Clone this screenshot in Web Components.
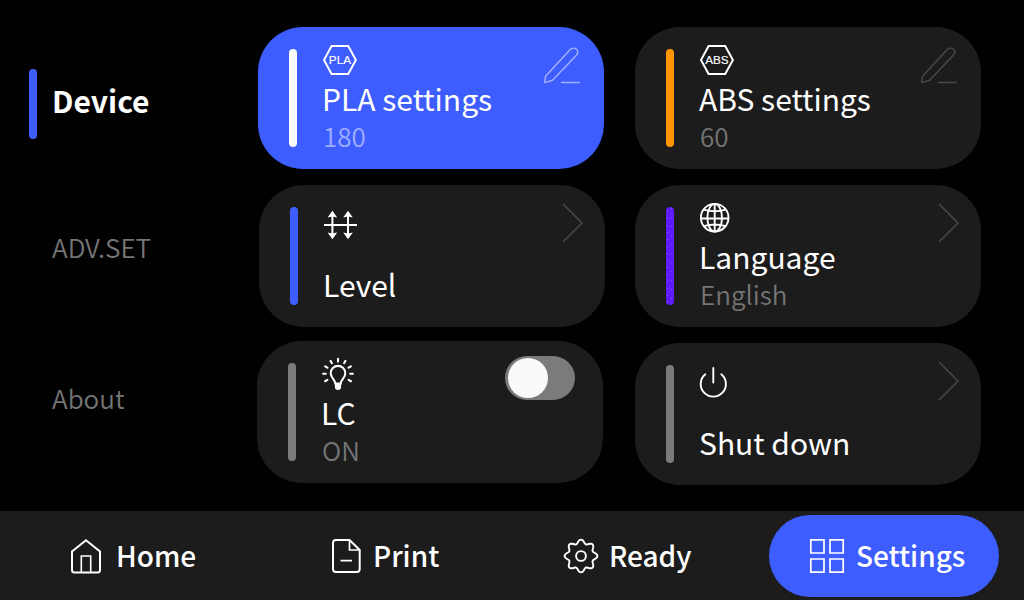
<!DOCTYPE html>
<html lang="en">
<head>
<meta charset="utf-8">
<title>Printer settings</title>
<style>
html,body{margin:0;height:100%;background:#010101;overflow:hidden}
body{font-family:"Noto Sans CJK SC","Noto Sans",sans-serif;color:#fff}
</style>
</head>
<body>
<printer-screen></printer-screen>
<script>
const gear = Array.from({length: 120}, (_, i) => {
  const t = i * Math.PI / 60, r = 14.5 + 1.9 * Math.cos(8 * t);
  return (17 + r * Math.cos(t)).toFixed(2) + ' ' + (17 + r * Math.sin(t)).toFixed(2);
}).join('L');
const hex = label => `<svg width="36" height="36"><path d="M9.600 3H26.200L33.900 17 26.200 31H9.600L2 17Z" stroke-width="2"/><text x="17.900" y="21" text-anchor="middle" font-family="Liberation Sans,sans-serif" font-size="11.7" fill="currentColor" stroke="currentColor" stroke-width=".15">${label}</text></svg>`;
const rays = [-120,-90,-60,-30,0,30,60,90,120].map(a => `<path d="M17 4.600V1.900" transform="rotate(${a} 17 16.800)"/>`).join('');
const ICONS = {
  pla: hex('PLA'),
  abs: hex('ABS'),
  level: `<svg width="36" height="40"><path d="M1 24H34" stroke-width="2"/><path d="M9.400 13V23M25 13V23M9.400 25V35M25 25V35" stroke-width="2"/><path fill="currentColor" stroke="none" d="M9.400 9.800 14.200 16.400 9.400 15.400 4.600 16.400ZM25 9.800 29.800 16.400 25 15.400 20.200 16.400ZM9.400 38.200 14.200 31.600 9.400 32.600 4.600 31.600ZM25 38.200 29.800 31.600 25 32.600 20.200 31.600Z"/></svg>`,
  globe: `<svg width="36" height="36"><g stroke-width="1.900"><circle cx="15.700" cy="16.700" r="13.800"/><ellipse cx="15.700" cy="16.700" rx="7.300" ry="13.800"/><path d="M15.700 3V30.500M1.900 17.500H29.500M4.700 8.600Q15.700 12 26.700 8.600M4.700 25.200Q15.700 21.800 26.700 25.200"/></g></svg>`,
  bulb: `<svg width="36" height="36"><g stroke-width="2.100" stroke-linecap="round">${rays}</g><path d="M14.300 26.500C14.300 23 9.700 21 9.700 16.200A7.300 7.300 0 0 1 24.300 16.200C24.300 21 19.700 23 19.700 26.500Z" stroke-width="2.100"/><path d="M13.900 26H20.100V30Q20.100 33 17 33T13.900 30Z" fill="currentColor" stroke="none"/></svg>`,
  power: `<svg width="36" height="40"><g stroke-width="1.900" stroke-linecap="round"><path d="M14.300 9V23.500M6.300 15.300A12.600 12.600 0 1 0 22.300 15.300"/></g></svg>`,
  pencil: `<svg width="38" height="38"><g stroke-width="1.500" stroke-linejoin="round" stroke-linecap="round"><path d="M1.800 35.600 2.500 29.200 27 2.800C29 0.700 31.800 0.700 33.500 2.200S35.200 6.200 33.400 8.200L9.500 33.300Z"/><path d="M18.500 35.500H36.500"/></g></svg>`,
  chevron: `<svg width="22" height="40"><path d="M1 1 20 20 1 39" stroke-width="1.500"/></svg>`,
  home: `<svg width="30" height="35"><path d="M1 12.500 15 1.200 29 12.500V31Q29 33.500 26.500 33.500H3.500Q1 33.500 1 31Z" stroke-width="2"/><path d="M10.300 33V17H19.700V33" stroke-width="1.600"/></svg>`,
  file: `<svg width="29" height="34"><path d="M4 1H17.500L27.700 11V30Q27.700 33 24.700 33H4Q1 33 1 30V4Q1 1 4 1Z" stroke-width="2"/><path d="M17.500 1V11H27.500M8.500 21.700H20" stroke-width="1.700"/></svg>`,
  gear: `<svg width="34" height="34"><path d="M${gear}Z" stroke-width="1.900"/><circle cx="17" cy="17" r="4.900" stroke-width="1.900"/></svg>`,
  grid: `<svg width="34" height="34"><path d="M.8.800H14V14H.8ZM20 .8H33.200V14H20ZM.8 20H14V33.200H.8ZM20 20H33.200V33.200H20Z" stroke-width="1.700"/></svg>`
};
const SVG_CSS = 'svg{display:block;overflow:visible;fill:none;stroke:currentColor}';

class UiIcon extends HTMLElement {
  connectedCallback() {
    this.attachShadow({mode: 'open'}).innerHTML =
      `<style>:host{display:block;flex:none}${SVG_CSS}</style>${ICONS[this.getAttribute('name')]}`;
  }
}
class ToggleSwitch extends HTMLElement {
  connectedCallback() {
    this.attachShadow({mode: 'open'}).innerHTML = `<style>
      :host{display:flex;align-items:center;box-sizing:border-box;width:70px;height:44px;padding-left:2.5px;border-radius:22px;background:#7b7b7b}
      i{width:40.500px;height:40.500px;border-radius:50%;background:#fafafa}</style><i></i>`;
  }
}
class SettingCard extends HTMLElement {
  connectedCallback() {
    this.attachShadow({mode: 'open'}).innerHTML = `<style>
      :host{display:flex;box-sizing:border-box;width:346px;height:142px;border-radius:45px;background:var(--bg,#1c1c1c);padding:16px 0 0 31px}
      .bar{flex:none;width:8px;height:98px;margin-top:6px;border-radius:4px;background:var(--bar,#7b7b7b)}
      .body{flex:1;padding-left:25px;display:flex;flex-direction:column;white-space:nowrap}
      .icon{height:35px}
      :host([single]) .icon{height:63px}
      .title{font-size:30px;line-height:41px;height:40px}
      .sub{font-size:26px;line-height:36px;font-weight:350;color:var(--sub,#757575);padding-left:1px}
      .act{margin:var(--act,2px 21px 0 0);color:var(--actc,#484848)}
      </style><div class="bar"></div><div class="body"><div class="icon"><slot name="icon"></slot></div>
      <div class="title"><slot></slot></div><div class="sub"><slot name="sub"></slot></div></div>
      <div class="act"><slot name="action"></slot></div>`;
  }
}
class SideTab extends HTMLElement {
  connectedCallback() {
    this.attachShadow({mode: 'open'}).innerHTML = `<style>
      :host{display:flex;align-items:center;height:70px;font-size:26px;font-weight:350;color:#757575;white-space:nowrap}
      i{width:8px;height:70px;border-radius:4px;margin-right:15px}
      :host([active]){font-size:30px;font-weight:700;color:#fff}
      :host([active]) i{background:#3d5dff}
      span{line-height:40px;padding-bottom:5px}
      :host([active]) span{padding-bottom:8px}</style><i></i><span><slot></slot></span>`;
  }
}
class NavItem extends HTMLElement {
  connectedCallback() {
    this.attachShadow({mode: 'open'}).innerHTML = `<style>
      :host{display:flex;align-items:center;box-sizing:border-box;height:82px;border-radius:41px;font-size:28px;font-weight:500;white-space:nowrap}
      :host([active]){background:#3d5dff}
      span{line-height:40px;margin-left:var(--gap,12px);padding-bottom:2px}</style>
      <slot name="icon"></slot><span><slot></slot></span>`;
  }
}
class PrinterScreen extends HTMLElement {
  connectedCallback() {
    this.attachShadow({mode: 'open'}).innerHTML = `<style>
      :host{display:grid;grid-template-rows:511px 89px;width:1024px;height:600px;background:#010101}
      main{display:grid;grid-template-columns:257px 378px 346px}
      aside{padding:68.500px 0 0 29px}
      .t2{margin-top:76px}.t3{margin-top:81px}
      .col{padding-top:27px}
      .a1{margin-left:1px;--bg:#3d5dff;--bar:#fafafa;--sub:#9eaeff;--actc:#a0b0ff;--act:4px 23px 0 0}
      .a2{margin:16px 0 0 2px;--bar:#3d5dff}
      .a3{margin-top:14px;--act:-1px 28px 0 0}
      .b1{--bar:#ff9500;--act:4px 23px 0 0}
      .b2,.b3{margin-top:16px}
      .b2{--bar:radial-gradient(circle at 5.500px 1.500px,#8058ff .5px,transparent 1px) 0 0/8px 9px,radial-gradient(circle at 1.500px 4.500px,#8058ff .5px,transparent 1px) 0 0/8px 7px,#5e1bff}
      nav{display:grid;grid-template-columns:70.500px 261px 232px 205.500px 230px;background:#1c1c1c;padding-top:4px}
      nav .n1{grid-column:2;--gap:15.500px}
      .n2{--gap:12.500px}
      .n3{--gap:11.500px}
      .n4{padding-left:41px}
      </style>
      <main>
        <aside><side-tab active class="t1">Device</side-tab><side-tab class="t2">ADV.SET</side-tab><side-tab class="t3">About</side-tab></aside>
        <section class="col">
          <setting-card class="a1"><ui-icon slot="icon" name="pla"></ui-icon>PLA settings<span slot="sub">180</span><ui-icon slot="action" name="pencil"></ui-icon></setting-card>
          <setting-card class="a2" single><ui-icon slot="icon" name="level"></ui-icon>Level<ui-icon slot="action" name="chevron"></ui-icon></setting-card>
          <setting-card class="a3"><ui-icon slot="icon" name="bulb"></ui-icon>LC<span slot="sub">ON</span><toggle-switch slot="action"></toggle-switch></setting-card>
        </section>
        <section class="col">
          <setting-card class="b1"><ui-icon slot="icon" name="abs"></ui-icon>ABS settings<span slot="sub">60</span><ui-icon slot="action" name="pencil"></ui-icon></setting-card>
          <setting-card class="b2"><ui-icon slot="icon" name="globe"></ui-icon>Language<span slot="sub">English</span><ui-icon slot="action" name="chevron"></ui-icon></setting-card>
          <setting-card class="b3" single><ui-icon slot="icon" name="power"></ui-icon>Shut down<ui-icon slot="action" name="chevron"></ui-icon></setting-card>
        </section>
      </main>
      <nav>
        <nav-item class="n1"><ui-icon slot="icon" name="home"></ui-icon>Home</nav-item>
        <nav-item class="n2"><ui-icon slot="icon" name="file"></ui-icon>Print</nav-item>
        <nav-item class="n3"><ui-icon slot="icon" name="gear"></ui-icon>Ready</nav-item>
        <nav-item class="n4" active><ui-icon slot="icon" name="grid"></ui-icon>Settings</nav-item>
      </nav>`;
  }
}
customElements.define('ui-icon', UiIcon);
customElements.define('toggle-switch', ToggleSwitch);
customElements.define('setting-card', SettingCard);
customElements.define('side-tab', SideTab);
customElements.define('nav-item', NavItem);
customElements.define('printer-screen', PrinterScreen);
</script>
</body>
</html>
